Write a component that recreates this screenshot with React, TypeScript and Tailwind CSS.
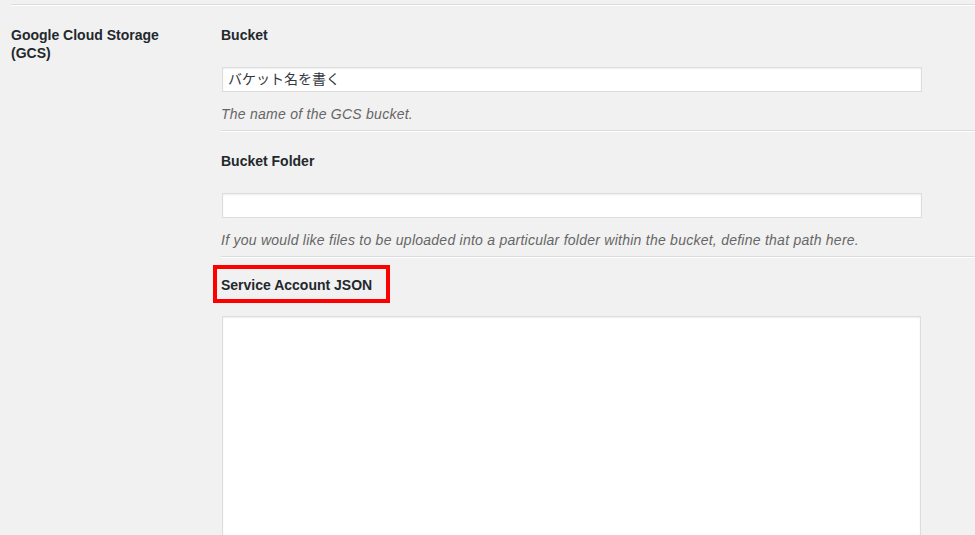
import React from "react";

const font = { fontFamily: '"Liberation Sans", "Noto Sans CJK JP", sans-serif' };

function Field({ label, desc, value }: { label: string; desc: string; value?: string }) {
  return (
    <div className="flex flex-col">
      <div className="h-[18px] text-[14px] leading-[18px] font-bold text-[#23282d]">{label}</div>
      <div className="ml-[1px] mt-[23px] h-[25px] w-[700px] border border-[#ddd] bg-white pl-[5px] text-[14px] leading-[23px] text-[#32373c] shadow-[inset_0_1px_2px_rgba(0,0,0,0.07)]">
        {value}
      </div>
      <div className="mt-[13px] h-[18px] text-[14px] leading-[18px] tracking-[0.25px] italic text-[#666]">{desc}</div>
    </div>
  );
}

export default function App() {
  return (
    <div className="h-[535px] w-[975px] overflow-hidden bg-[#f1f1f1]" style={font}>
      <div className="ml-[11px] pt-[4px]">
        <div className="h-[2px] border-t border-[#dcdcdc] bg-white" />
        <div className="flex pt-[20px]">
          {/* left heading */}
          <div className="w-[210px] text-[14px] leading-[18px] font-bold text-[#23282d]">
            Google Cloud Storage
            <br />
            (GCS)
          </div>

          {/* fields */}
          <div className="flex flex-1 flex-col">
            <Field label="Bucket" desc="The name of the GCS bucket." value="バケット名を書く" />
            <div className="mt-[7px] h-[2px] border-t border-[#dcdcdc] bg-white" />
            <div className="pt-[20px]">
              <Field
                label="Bucket Folder"
                desc="If you would like files to be uploaded into a particular folder within the bucket, define that path here."
              />
            </div>
            <div className="mt-[7px] h-[2px] border-t border-[#dcdcdc] bg-white" />
            <div className="relative pt-[18px]">
              <div className="h-[18px] text-[14px] leading-[18px] font-bold text-[#23282d]">Service Account JSON</div>
              <div className="absolute left-[-8px] top-[7px] h-[38px] w-[177px] border-[4px] border-[#ff0000]" />
            </div>
            <div className="ml-[1px] mt-[22px] h-[300px] w-[699px] border border-[#ddd] bg-white shadow-[inset_0_1px_2px_rgba(0,0,0,0.07)]" />
          </div>
        </div>
      </div>
    </div>
  );
}
